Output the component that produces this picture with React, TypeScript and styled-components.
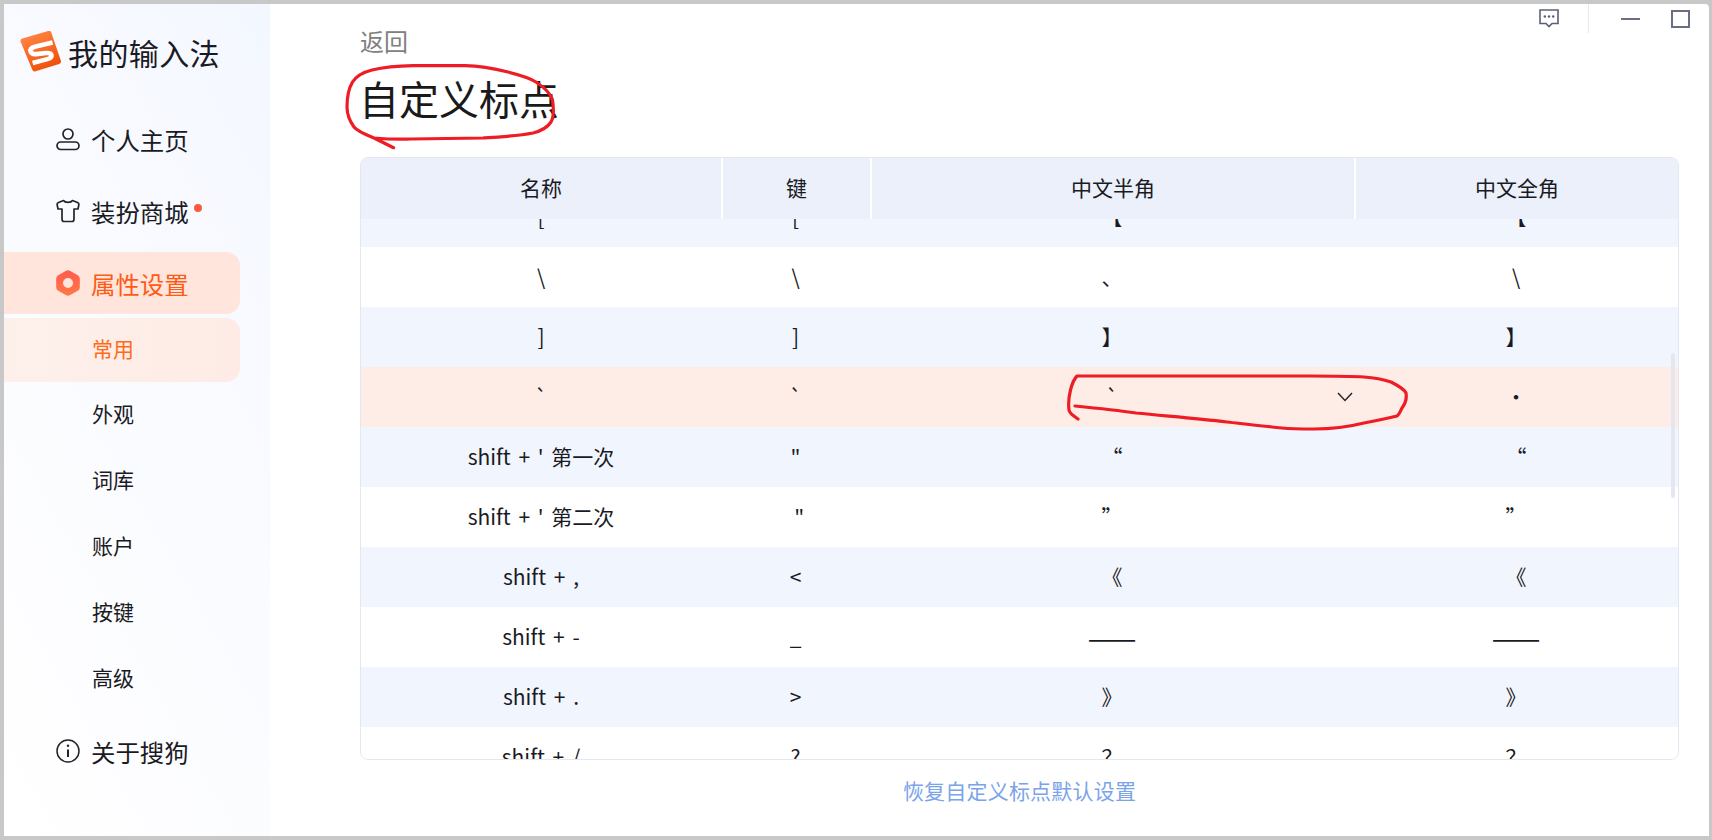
import React from 'react';
import styled, { createGlobalStyle } from 'styled-components';

const GlobalStyle = createGlobalStyle`
  html, body {
    margin: 0;
    padding: 0;
    height: 100%;
    overflow: hidden;
    background: #c8c8c8;
  }
  * { box-sizing: border-box; }
`;

// Window
const Page = styled.div`
  width: 1712px;
  height: 840px;
  padding: 4px 3px 4px 4px;
  background: #c8c8c8;
  font-family: "Noto Sans CJK SC", "Noto Sans", sans-serif;
  color: #1a1a24;
`;

const Window = styled.div`
  position: relative;
  display: flex;
  width: 100%;
  height: 100%;
  background: #fff;
  border-top-right-radius: 4px;
  overflow: hidden;
`;

// Sidebar
const Sidebar = styled.aside`
  display: flex;
  flex-direction: column;
  flex: 0 0 266px;
  background: linear-gradient(60deg, #ffffff 0%, #fafbff 55%, #f3f7ff 100%);
`;

const Brand = styled.div`
  display: flex;
  align-items: center;
  gap: 6px;
  height: 104px;
  padding: 0 0 8px 16px;
  font-size: 30px;
  letter-spacing: 0.4px;
`;

const NavItem = styled.div<{ $active?: boolean; $top: number }>`
  display: flex;
  align-items: center;
  gap: 11px;
  width: 236px;
  height: 62px;
  margin-top: ${(p) => p.$top}px;
  padding-left: 52px;
  font-size: 24.4px;
  border-radius: 0 14px 14px 0;
  color: ${(p) => (p.$active ? '#ff5a14' : '#1a1a24')};
  background: ${(p) => (p.$active ? '#ffe5dc' : 'transparent')};
`;

const SubItem = styled.div<{ $active?: boolean }>`
  display: flex;
  align-items: center;
  width: 236px;
  height: ${(p) => (p.$active ? '64px' : '66px')};
  padding: 0 0 5px 88px;
  font-size: 21px;
  border-radius: 0 14px 14px 0;
  margin-top: ${(p) => (p.$active ? '4px' : '0')};
  color: ${(p) => (p.$active ? '#ff6a1a' : '#1a1a24')};
  background: ${(p) => (p.$active ? 'linear-gradient(90deg, #fdf0eb, #feebe5)' : 'transparent')};
`;

const Dot = styled.span`
  align-self: flex-start;
  width: 8px;
  height: 8px;
  margin: 24px 0 0 -6px;
  border-radius: 50%;
  background: #ff5a3c;
`;

// Content
const Main = styled.main`
  display: flex;
  flex-direction: column;
  flex: 1;
  min-width: 0;
  padding: 0 30px 0 90px;
`;

const TopRow = styled.div`
  display: flex;
  justify-content: space-between;
  height: 52px;
  margin-right: -11px;
`;

const BackLink = styled.div`
  align-self: flex-end;
  font-size: 24px;
  line-height: 30px;
  color: #808080;
`;

const WindowControls = styled.div`
  display: flex;
  align-items: flex-start;
`;

const ControlIcon = styled.svg<{ $left: number; $top: number }>`
  display: block;
  margin: ${(p) => p.$top}px 0 0 ${(p) => p.$left}px;
`;

const ControlDivider = styled.div`
  width: 1px;
  height: 29px;
  margin-left: 29px;
  background: #e8e9ee;
`;

const Title = styled.h1`
  margin: 14px 0 0 -1px;
  font-size: 40px;
  font-weight: 400;
  line-height: 56px;
  color: #1a1a1a;
`;

const TableBox = styled.div`
  position: relative;
  height: 603px;
  margin-top: 31px;
  border: 1px solid #e4e7ef;
  border-radius: 8px;
  overflow: hidden;
`;

const columns = '360px 149px 484px 1fr';

const HeadRow = styled.div`
  position: relative;
  z-index: 1;
  display: grid;
  grid-template-columns: ${columns};
  height: 61px;
  background: #ebf0fa;
`;

const HeadCell = styled.div<{ $first?: boolean }>`
  font-size: 21px;
  line-height: 58px;
  text-align: center;
  border-left: ${(p) => (p.$first ? 'none' : '2px solid #fff')};
`;

const Rows = styled.div`
  margin-top: -32px;
`;

const Row = styled.div<{ $tone: 'blue' | 'white' | 'peach' }>`
  display: grid;
  grid-template-columns: ${columns};
  height: 60px;
  background: ${(p) => (p.$tone === 'peach' ? '#feede6' : p.$tone === 'blue' ? '#f1f5fd' : '#fff')};
`;

const Cell = styled.div`
  position: relative;
  font-size: 21px;
  line-height: 58px;
  text-align: center;
  white-space: pre;
  word-spacing: 3px;
`;

// The long dash runs wider in the reference than the body size gives
const LongDash = styled.span`
  font-size: 29px;
  line-height: 58px;
`;

const Chevron = styled.svg`
  position: absolute;
  top: 25px;
  left: 467px;
`;

const ScrollThumb = styled.div`
  position: absolute;
  z-index: 2;
  top: 195px;
  right: 3px;
  width: 4px;
  height: 145px;
  border-radius: 2px;
  background: #e4e7ef;
`;

const ResetLink = styled.div`
  margin-top: 15px;
  font-size: 21px;
  line-height: 30px;
  letter-spacing: 0.2px;
  text-align: center;
  color: #7ba3ea;
`;

// Marker pen scribbles drawn on top of the screenshot
const Scribble = styled.svg`
  position: absolute;
  z-index: 5;
  top: -4px;
  left: -4px;
  pointer-events: none;
`;

const Logo = () => (
  <svg width="42" height="42" viewBox="0 0 40 40">
    <defs>
      <linearGradient id="logoFill" x1="0.2" y1="0" x2="0.7" y2="1">
        <stop offset="0" stopColor="#ff8443" />
        <stop offset="1" stopColor="#f0500c" />
      </linearGradient>
    </defs>
    <polygon
      points="3,9.5 27.5,2.5 36.5,29 14,36"
      fill="url(#logoFill)"
      stroke="url(#logoFill)"
      strokeWidth="5"
      strokeLinejoin="round"
    />
    <path
      d="M31 11 L14 15 C7.500 17 9.500 22.500 15.500 22 L25 21 C31 20.500 32 25 26 26.800 L12 30.500"
      fill="none"
      stroke="#fff"
      strokeWidth="4.4"
      strokeLinejoin="round"
    />
  </svg>
);

const UserIcon = () => (
  <svg width="24" height="24" viewBox="0 0 24 24" fill="none" stroke="#23232b" strokeWidth="1.7">
    <circle cx="12" cy="7" r="5" />
    <rect x="1" y="15" width="22" height="7.5" rx="3.75" />
  </svg>
);

const ShirtIcon = () => (
  <svg width="24" height="24" viewBox="0 0 24 24" fill="none" stroke="#23232b" strokeWidth="1.7" strokeLinejoin="round">
    <path d="M7.5 1.5 L2.5 3.5 C1.4 4 1 5 1.2 6 L2 10 L6 10 V20 C6 21.5 6.8 22.5 8 22.5 H16 C17.2 22.5 18 21.5 18 20 V10 L22 10 L22.8 6 C23 5 22.6 4 21.5 3.5 L16.5 1.5 C15 4 9 4 7.5 1.5 Z" />
  </svg>
);

const SettingsIcon = () => (
  <svg width="24" height="26" viewBox="0 0 24 26">
    <defs>
      <linearGradient id="hexFill" x1="0" y1="0" x2="0" y2="1">
        <stop offset="0" stopColor="#ff5a4e" />
        <stop offset="1" stopColor="#ff7a45" />
      </linearGradient>
    </defs>
    <path
      fillRule="evenodd"
      fill="url(#hexFill)"
      d="M10.2 .8 a4 4 0 0 1 3.6 0 l8 4.4 a4 4 0 0 1 2 3.4 v8.8 a4 4 0 0 1 -2 3.4 l-8 4.4 a4 4 0 0 1 -3.6 0 l-8 -4.4 a4 4 0 0 1 -2 -3.4 v-8.8 a4 4 0 0 1 2 -3.4 Z M12 8 a5 5 0 1 0 0 10 a5 5 0 1 0 0 -10 Z"
    />
  </svg>
);

const InfoIcon = () => (
  <svg width="24" height="24" viewBox="0 0 24 24" fill="none" stroke="#23232b" strokeWidth="1.5">
    <circle cx="12" cy="12" r="11" />
    <path d="M12 10.5 V18" strokeWidth="2" />
    <circle cx="12" cy="6.8" r="1.2" fill="#23232b" stroke="none" />
  </svg>
);

const rowData: { cells: [string, string, string, string]; tone: 'blue' | 'white' | 'peach'; select?: boolean }[] = [
  { cells: ['[', '[', '【', '【'], tone: 'blue' },
  { cells: ['\\', '\\', '、', '\\'], tone: 'white' },
  { cells: [']', ']', '】', '】'], tone: 'blue' },
  { cells: ['`', '`', '`', '·'], tone: 'peach', select: true },
  { cells: ["shift + ' 第一次", '"', '“', '“'], tone: 'blue' },
  { cells: ["shift + ' 第二次", '\u00a0"', '”', '”'], tone: 'white' },
  { cells: ['shift + ,', '<', '《', '《'], tone: 'blue' },
  { cells: ['shift + -', '_', '——', '——'], tone: 'white' },
  { cells: ['shift + .', '>', '》', '》'], tone: 'blue' },
  { cells: ['shift + /', '?', '？', '？'], tone: 'white' },
];

const subItems = ['常用', '外观', '词库', '账户', '按键', '高级'];
const headers = ['名称', '键', '中文半角', '中文全角'];

export default function App() {
  return (
    <Page>
      <GlobalStyle />
      <Window>
        <Sidebar>
          <Brand>
            <Logo />
            我的输入法
          </Brand>
          <NavItem $top={0}>
            <UserIcon />
            个人主页
          </NavItem>
          <NavItem $top={10}>
            <ShirtIcon />
            装扮商城
            <Dot />
          </NavItem>
          <NavItem $top={10} $active>
            <SettingsIcon />
            属性设置
          </NavItem>
          {subItems.map((label, i) => (
            <SubItem key={label} $active={i === 0}>
              {label}
            </SubItem>
          ))}
          <NavItem $top={8}>
            <InfoIcon />
            关于搜狗
          </NavItem>
        </Sidebar>

        <Main>
          <TopRow>
            <BackLink>返回</BackLink>
            <WindowControls>
              <ControlIcon $left={0} $top={5} width="20" height="19" viewBox="0 0 20 19" fill="none" stroke="#5b6078" strokeWidth="1.6">
                <path d="M1 1 H19 V14.5 H13 L10 17.5 L7 14.5 H1 Z" />
                <circle cx="5.8" cy="7.5" r="1.2" fill="#5b6078" stroke="none" />
                <circle cx="10" cy="7.5" r="1.2" fill="#5b6078" stroke="none" />
                <circle cx="14.2" cy="7.5" r="1.2" fill="#5b6078" stroke="none" />
              </ControlIcon>
              <ControlDivider />
              <ControlIcon $left={32} $top={14} width="19" height="2" viewBox="0 0 19 2">
                <rect width="19" height="2" fill="#6a6f85" />
              </ControlIcon>
              <ControlIcon $left={31} $top={6} width="19" height="18" viewBox="0 0 19 18" fill="none" stroke="#6a6f85" strokeWidth="2">
                <rect x="1" y="1" width="17" height="16" />
              </ControlIcon>
            </WindowControls>
          </TopRow>

          <Title>自定义标点</Title>

          <TableBox>
            <HeadRow>
              {headers.map((h, i) => (
                <HeadCell key={h} $first={i === 0}>
                  {h}
                </HeadCell>
              ))}
            </HeadRow>
            <Rows>
              {rowData.map((row, r) => (
                <Row key={r} $tone={row.tone}>
                  {row.cells.map((text, c) => (
                    <Cell key={c}>
                      {text === '——' ? <LongDash>{text}</LongDash> : text}
                      {row.select && c === 2 && (
                        <Chevron width="16" height="10" viewBox="0 0 16 10" fill="none" stroke="#26262e" strokeWidth="1.5">
                          <path d="M1 1 L8 8.5 L15 1" />
                        </Chevron>
                      )}
                    </Cell>
                  ))}
                </Row>
              ))}
            </Rows>
            <ScrollThumb />
          </TableBox>

          <ResetLink>恢复自定义标点默认设置</ResetLink>
        </Main>

        <Scribble width="1712" height="840" viewBox="0 0 1712 840" fill="none" stroke="#ee1c25" strokeWidth="3.2" strokeLinecap="round" strokeLinejoin="round">
          <path d="M393.6 147.7 C386 144 380 141 374 138 C364 134 357 131 354 127 C349 120 347 113 347 107 C347 97 349 88 352.5 82 C357 75 364 72 372 70 C385 67 398 66 413 65.7 L465 65.7 C482 66 496 69 508 72 C520 75 530 78 536 82 C545 88 551 94 552.5 100 C554 110 554 117 551 122 C547 128 541 131 533 133 C518 136 500 137 483 138 L411 139 C398 139.500 386 139 374 138" />
          <path d="M1078 419 C1072 415 1069 412 1069 410 C1068 402 1069 396 1070.500 390 C1072 384 1074 379 1077 376 L1182 376 L1308 376 C1330 376 1350 376 1364 377 C1378 378 1385 380 1391 382 C1399 386 1404 389 1406 393 C1407 399 1405 404 1402 408 C1400 412 1399 415 1397 416 C1385 419 1375 421 1364 423 C1348 427 1330 429 1314 429 C1303 429 1292 429 1282 428 C1262 426 1245 424 1227 422 C1195 418 1165 416 1136 413 C1115 410 1095 408 1075 406" />
        </Scribble>
      </Window>
    </Page>
  );
}
